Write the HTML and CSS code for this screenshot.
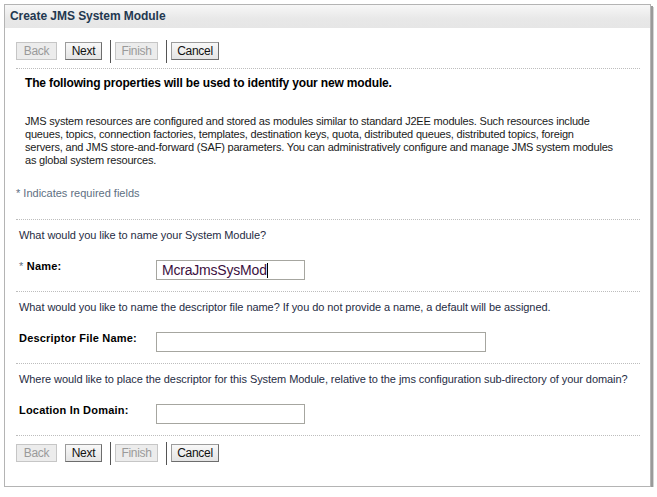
FILE: index.html
```html
<!DOCTYPE html>
<html>
<head>
<meta charset="utf-8">
<title>Create JMS System Module</title>
<link rel="stylesheet" href="styles.css">
</head>
<body>
<div class="panel">
  <div class="titlebar">Create JMS System Module</div>
  <div class="content">
    <div class="btnbar top">
      <button class="btn back" disabled>Back</button>
      <button class="btn next">Next</button>
      <span class="sep"></span>
      <button class="btn finish" disabled>Finish</button>
      <span class="sep"></span>
      <button class="btn cancel">Cancel</button>
    </div>
    <div class="intro">
      <h2 class="heading">The following properties will be used to identify your new module.</h2>
      <p class="desc">JMS system resources are configured and stored as modules similar to standard J2EE modules. Such resources include<br>queues, topics, connection factories, templates, destination keys, quota, distributed queues, distributed topics, foreign<br>servers, and JMS store-and-forward (SAF) parameters. You can administratively configure and manage JMS system modules<br>as global system resources.</p>
    </div>
    <div class="required">* Indicates required fields</div>
    <div class="section">
      <div class="question">What would you like to name your System Module?</div>
      <div class="field">
        <label class="label"><span class="star">*</span> Name:</label>
        <div class="input short"><span class="value">McraJmsSysMod</span><span class="caret"></span></div>
      </div>
    </div>
    <div class="section">
      <div class="question">What would you like to name the descriptor file name? If you do not provide a name, a default will be assigned.</div>
      <div class="field">
        <label class="label">Descriptor File Name:</label>
        <div class="input long"></div>
      </div>
    </div>
    <div class="section">
      <div class="question">Where would like to place the descriptor for this System Module, relative to the jms configuration sub-directory of your domain?</div>
      <div class="field">
        <label class="label">Location In Domain:</label>
        <div class="input short"></div>
      </div>
    </div>
    <div class="btnbar bottom">
      <button class="btn back" disabled>Back</button>
      <button class="btn next">Next</button>
      <span class="sep"></span>
      <button class="btn finish" disabled>Finish</button>
      <span class="sep"></span>
      <button class="btn cancel">Cancel</button>
    </div>
  </div>
</div>
</body>
</html>
```
FILE: styles.css
```css
html, body {
  margin: 0;
  padding: 0;
  background: #ffffff;
}
body {
  font-family: "Liberation Sans", Arial, sans-serif;
  font-size: 11px;
  color: #1a1a1a;
}
.panel {
  margin: 4px 0 0 4px;
  width: 647px;
  height: 483px;
  border: 1px solid #b4b4b4;
  box-shadow: 2px 2px 0 #9a9a9a, 3px 3px 0 #d4d4d4;
  background: #fff;
  box-sizing: border-box;
}
.titlebar {
  height: 23px;
  line-height: 23px;
  padding-left: 5px;
  background: linear-gradient(#f7f7f7, #e8e8e8 60%, #e6e6e6);
  font-weight: bold;
  font-size: 12px;
  letter-spacing: -0.05px;
  color: #233850;
}
.content {
  padding: 0 10px 0 11px;
}
.btnbar {
  display: flex;
  align-items: center;
  gap: 8px;
  height: 24px;
  padding-bottom: 5px;
  border-bottom: 1px dotted #bdbdbd;
}
.btnbar.top {
  margin-top: 11px;
}
.btnbar.bottom {
  border-bottom: none;
  padding-top: 5px;
}
.btn {
  font-family: "Liberation Sans", Arial, sans-serif;
  font-size: 12px;
  letter-spacing: -0.3px;
  height: 18px;
  padding: 0;
  margin: 0;
  line-height: 16px;
  text-align: center;
  color: #111;
  background: linear-gradient(#f8f8f8, #e4e4e4);
  border: 1px solid #9c9c9c;
  border-right-color: #6d6d6d;
  border-bottom-color: #6d6d6d;
  border-radius: 0;
}
.btn.back { width: 41px; }
.btn.next { width: 37px; }
.btn.finish { width: 43px; }
.btn.cancel { width: 48px; }
.btn[disabled] {
  color: #9a9a9a;
  background: #ececec;
  border-color: #c6c6c6;
}
.sep {
  width: 1px;
  height: 23px;
  background: #555;
  margin-right: -4px;
}
.intro {
  padding: 7px 0 0 9px;
}
.heading {
  margin: 0;
  font-size: 12px;
  font-weight: bold;
  letter-spacing: -0.15px;
  color: #000;
  line-height: 14px;
}
.desc {
  margin: 25px 0 0;
  line-height: 13px;
  letter-spacing: -0.19px;
  color: #1a1a1a;
  white-space: nowrap;
}
.required {
  margin-top: 20px;
  color: #5e6f82;
  padding-bottom: 20px;
  border-bottom: 1px dotted #bdbdbd;
}
.section {
  padding: 9px 3px 0;
  height: 62px;
  border-bottom: 1px dotted #bdbdbd;
}
.question {
  line-height: 13px;
  letter-spacing: -0.065px;
  color: #1f2c44;
}
.field {
  display: flex;
  align-items: flex-start;
  margin-top: 18px;
}
.label {
  width: 137px;
  font-weight: bold;
  letter-spacing: 0.2px;
  color: #000;
  line-height: 13px;
}
.star {
  color: #5e6f82;
  font-weight: normal;
}
.input {
  height: 20px;
  border: 1px solid #a6a6a0;
  box-sizing: border-box;
  display: flex;
  align-items: center;
  padding-left: 5px;
}
.input.short { width: 149px; }
.input.long { width: 330px; }
.value {
  font-size: 14px;
  letter-spacing: -0.2px;
  color: #3c1040;
  font-family: "Liberation Sans", Arial, sans-serif;
}
.caret {
  width: 1px;
  height: 15px;
  background: #000;
}
```
